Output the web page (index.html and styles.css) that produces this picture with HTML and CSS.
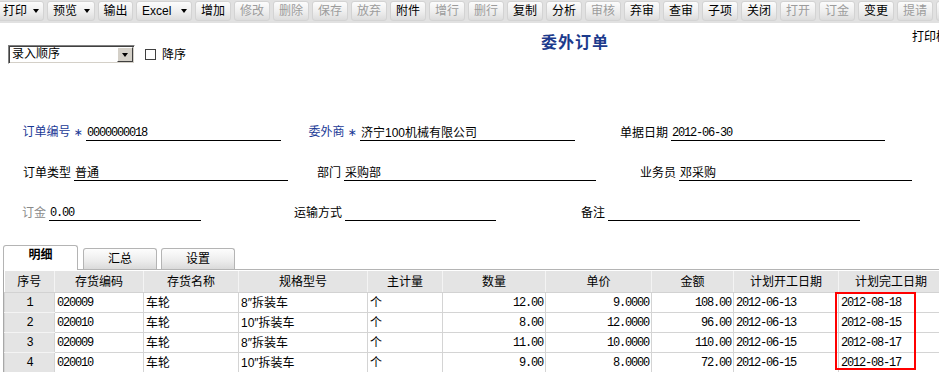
FILE: index.html
```html
<!DOCTYPE html>
<html lang="zh-CN">
<head>
  <meta charset="UTF-8">
  <title>委外订单</title>
  <link rel="stylesheet" href="styles.css">
</head>
<body>
  <div class="toolbar">
    <span class="tb drop tb-print">打印<i class="arr"></i></span>
    <span class="tb drop tb-preview">预览<i class="arr"></i></span>
    <span class="tb tb-out">输出</span>
    <span class="tb drop tb-excel">Excel<i class="arr"></i></span>
    <span class="tb">增加</span>
    <span class="tb off">修改</span>
    <span class="tb off">删除</span>
    <span class="tb off">保存</span>
    <span class="tb off">放弃</span>
    <span class="tb">附件</span>
    <span class="tb off">增行</span>
    <span class="tb off">删行</span>
    <span class="tb">复制</span>
    <span class="tb">分析</span>
    <span class="tb off">审核</span>
    <span class="tb">弃审</span>
    <span class="tb">查审</span>
    <span class="tb">子项</span>
    <span class="tb">关闭</span>
    <span class="tb off">打开</span>
    <span class="tb off">订金</span>
    <span class="tb">变更</span>
    <span class="tb off">提请</span>
    <span class="tb"></span>
  </div>

  <div class="head">
    <div class="sort">
      <div class="combo">
        <span class="combo-text">录入顺序</span>
        <span class="combo-btn"><i class="arr"></i></span>
      </div>
      <span class="check"></span>
      <span>降序</span>
    </div>
    <h1 class="title">委外订单</h1>
    <div class="print-tpl">打印模</div>
  </div>

  <div class="form">
    <div class="frow r1">
      <span class="lbl key">订单编号 <em>∗</em></span><span class="val num">0000000018</span>
      <span class="lbl key">委外商 <em>∗</em></span><span class="val">济宁100机械有限公司</span>
      <span class="lbl">单据日期</span><span class="val num">2012-06-30</span>
    </div>
    <div class="frow r2">
      <span class="lbl">订单类型</span><span class="val">普通</span>
      <span class="lbl">部门</span><span class="val">采购部</span>
      <span class="lbl">业务员</span><span class="val">邓采购</span>
    </div>
    <div class="frow r3">
      <span class="lbl muted">订金</span><span class="val num">0.00</span>
      <span class="lbl">运输方式</span><span class="val"></span>
      <span class="lbl">备注</span><span class="val"></span>
    </div>
  </div>

  <div class="tabs">
    <span class="tab active">明细</span>
    <span class="tab">汇总</span>
    <span class="tab">设置</span>
  </div>

  <div class="grid">
    <table>
      <colgroup>
        <col style="width:50px"><col style="width:89px"><col style="width:95px"><col style="width:129px"><col style="width:75px">
        <col style="width:103px"><col style="width:106px"><col style="width:82px"><col style="width:105px"><col style="width:105px">
      </colgroup>
      <thead>
        <tr>
          <th>序号</th><th>存货编码</th><th>存货名称</th><th>规格型号</th><th>主计量</th>
          <th>数量</th><th>单价</th><th>金额</th><th>计划开工日期</th><th>计划完工日期</th>
        </tr>
      </thead>
      <tbody>
        <tr>
          <td class="no num">1</td><td class="num">020009</td><td>车轮</td><td>8″拆装车</td><td>个</td>
          <td class="r num">12.00</td><td class="r num">9.0000</td><td class="r num">108.00</td><td class="num">2012-06-13</td><td class="num">2012-08-18</td>
        </tr>
        <tr>
          <td class="no num">2</td><td class="num">020010</td><td>车轮</td><td>10″拆装车</td><td>个</td>
          <td class="r num">8.00</td><td class="r num">12.0000</td><td class="r num">96.00</td><td class="num">2012-06-13</td><td class="num">2012-08-15</td>
        </tr>
        <tr>
          <td class="no num">3</td><td class="num">020009</td><td>车轮</td><td>8″拆装车</td><td>个</td>
          <td class="r num">11.00</td><td class="r num">10.0000</td><td class="r num">110.00</td><td class="num">2012-06-15</td><td class="num">2012-08-17</td>
        </tr>
        <tr>
          <td class="no num">4</td><td class="num">020010</td><td>车轮</td><td>10″拆装车</td><td>个</td>
          <td class="r num">9.00</td><td class="r num">8.0000</td><td class="r num">72.00</td><td class="num">2012-06-15</td><td class="num">2012-08-17</td>
        </tr>
      </tbody>
    </table>
    <div class="mark"></div>
  </div>
</body>
</html>
```

FILE: styles.css
```css
html,
body {
  margin: 0;
  overflow: hidden;
}

body {
  width: 939px;
  height: 372px;
  background: #fff;
  color: #000;
  font: 12px/14px "Liberation Sans", "Noto Sans CJK SC", sans-serif;
}

.num {
  font-family: "Liberation Mono", "Noto Sans CJK SC", monospace;
  font-size: 12px;
  letter-spacing: -1.2px;
}

/* toolbar */
.toolbar {
  display: flex;
  gap: 3px;
  height: 23px;
  padding-top: 1px;
  box-sizing: border-box;
  background: #e1e1e1;
  white-space: nowrap;
}

.tb {
  flex: none;
  width: 36px;
  height: 20px;
  box-sizing: border-box;
  border: 1px solid #d3d3d3;
  border-radius: 3px;
  background: linear-gradient(#fcfcfc, #eeeeee 55%, #dcdcdc);
  display: flex;
  align-items: center;
  justify-content: center;
  line-height: 18px;
}

.tb.off {
  color: #9c9c9c;
}

.tb.drop {
  justify-content: space-between;
  padding: 0 4px 0 5px;
}

.tb-print {
  width: 47px;
  margin-left: -3px;
}

.tb-preview {
  width: 48px;
}

.tb-out {
  width: 35px;
}

.tb-excel {
  width: 56px;
  padding-left: 7px;
}

.arr {
  width: 0;
  height: 0;
  border-left: 3.5px solid transparent;
  border-right: 3.5px solid transparent;
  border-top: 4px solid #000;
}

/* heading */
.head {
  display: grid;
  grid-template-columns: 533px 371px 1fr;
  height: 78px;
  padding-left: 8px;
  white-space: nowrap;
}

.sort {
  display: flex;
  align-items: center;
  align-self: start;
  margin-top: 22px;
}

.combo {
  display: flex;
  width: 127px;
  height: 19px;
  box-sizing: border-box;
  border: 1px solid;
  border-color: #808080 #ffffff #ffffff #808080;
  box-shadow: inset 1px 1px 0 #404040, inset -1px -1px 0 #d4d0c8;
  background: #fff;
}

.combo-text {
  flex: 1;
  padding-left: 3px;
  line-height: 17px;
}

.combo-btn {
  width: 16px;
  margin: 1px;
  box-sizing: border-box;
  border: 1px solid;
  border-color: #ffffff #404040 #404040 #ffffff;
  background: #d4d0c8;
  display: flex;
  align-items: center;
  justify-content: center;
}

.check {
  width: 11px;
  height: 11px;
  box-sizing: border-box;
  border: 1px solid #404040;
  margin: 0 6px 0 10px;
}

.title {
  align-self: start;
  margin: 10px 0 0;
  font-size: 16px;
  line-height: 20px;
  font-weight: bold;
  letter-spacing: 1px;
  color: #1c3a8c;
}

.print-tpl {
  align-self: start;
  margin-top: 7px;
}

/* form */
.frow {
  display: grid;
  height: 40px;
  align-items: end;
  white-space: nowrap;
}

.r1 {
  grid-template-columns: 86px 195px 79px 215px 96px 214px;
}

.r2 {
  grid-template-columns: 74px 214px 56px 252px 83px 233px;
}

.r3 {
  grid-template-columns: 49px 152px 144px 151px 112px 252px;
}

.lbl {
  text-align: right;
  padding-right: 3px;
  margin-bottom: 1px;
  line-height: 14px;
}

.key {
  color: #1a3a96;
}

.key em {
  font-style: normal;
  font-family: "DejaVu Sans", sans-serif;
  font-size: 11px;
}

.muted {
  color: #8a8a8a;
}

.val {
  height: 14px;
  line-height: 14px;
  padding-left: 1px;
  border-bottom: 1px solid #000;
}

/* tabs */
.tabs {
  display: flex;
  align-items: flex-end;
  height: 24px;
  margin: 24px 0 0 3px;
  border-bottom: 1px solid #b4b4b4;
}

.tab {
  width: 74px;
  height: 21px;
  box-sizing: border-box;
  margin-left: 4px;
  border: 1px solid #b4b4b4;
  border-bottom: none;
  border-radius: 3px 3px 0 0;
  background: linear-gradient(#fdfdfd, #ececec 60%, #dadada);
  text-align: center;
  line-height: 21px;
}

.tab.active {
  width: 75px;
  height: 25px;
  margin: 0 1px -1px 0;
  background: #fff;
  font-weight: bold;
  line-height: 18px;
}

/* grid */
.grid {
  position: relative;
  margin-left: 3px;
  padding-top: 1px;
  border-left: 1px solid #a8a8a8;
}

table {
  width: 939px;
  table-layout: fixed;
  border-collapse: collapse;
}

th {
  height: 21px;
  padding: 0;
  background: #e4e4e4;
  font-weight: normal;
  border-right: 1px solid #f4f4f4;
  border-bottom: 1px solid #d2d2d2;
}

td {
  height: 19px;
  padding: 0 2px;
  border: 1px solid #d4d4d4;
  white-space: nowrap;
  overflow: hidden;
}

td.no {
  text-align: center;
  background: #e4e4e4;
  border-color: #f4f4f4 #d4d4d4;
}

td.r {
  text-align: right;
}

.mark {
  position: absolute;
  left: 831px;
  top: 22px;
  width: 81px;
  height: 78px;
  box-sizing: border-box;
  border: 2px solid #f00;
}
```
